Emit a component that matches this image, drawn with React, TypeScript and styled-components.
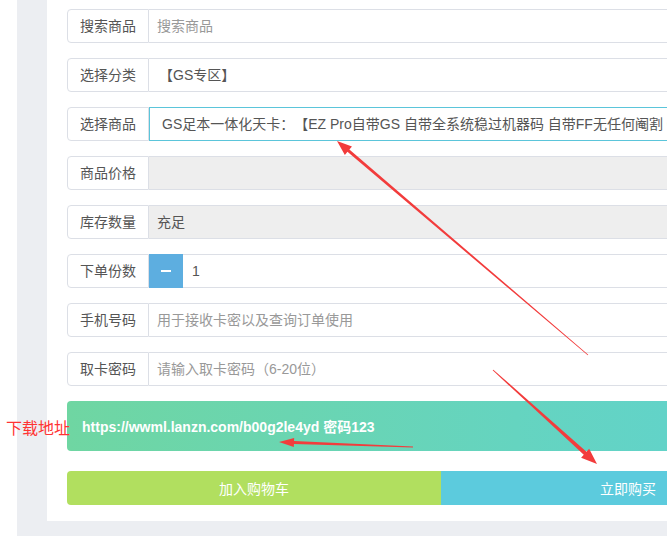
import React from 'react';
import styled, { createGlobalStyle } from 'styled-components';

const GlobalStyle = createGlobalStyle`
  html, body {
    margin: 0;
    padding: 0;
    background: #fff;
    overflow: hidden;
  }
  body {
    font-family: "Liberation Sans", Arial, "Noto Sans CJK SC", sans-serif;
    text-spacing-trim: space-all;
  }
`;

const Page = styled.div`
  position: relative;
  width: 667px;
  height: 536px;
  overflow: hidden;
  display: flex;
`;

const Gutter = styled.div`
  width: 17px;
  flex-shrink: 0;
  background: #fff;
`;

const Backdrop = styled.div`
  flex: 1;
  background: #eceef2;
  padding-left: 30px;
  display: flex;
  align-items: flex-start;
`;

const Panel = styled.div`
  width: 748px;
  flex-shrink: 0;
  background: #fff;
  padding: 9px 20px 16px;
  display: flex;
  flex-direction: column;
`;

const Group = styled.div`
  display: flex;
  height: 34px;
  margin-bottom: 15px;
`;

const Label = styled.div`
  box-sizing: border-box;
  width: 82px;
  flex-shrink: 0;
  padding: 0 12px;
  border: 1px solid #dcdfe6;
  border-radius: 4px 0 0 4px;
  background: #fff;
  color: #555;
  font-size: 14px;
  line-height: 32px;
  white-space: nowrap;
`;

const Field = styled.div<{ $disabled?: boolean; $focus?: boolean; $pad?: number; $muted?: boolean }>`
  box-sizing: border-box;
  flex: 1;
  min-width: 0;
  border: 1px solid ${p => (p.$focus ? '#5bc5da' : '#dcdfe6')};
  border-left: ${p => (p.$focus ? '1px solid #5bc5da' : 'none')};
  background: ${p => (p.$disabled ? '#eeeeee' : '#fff')};
  color: ${p => (p.$muted ? '#999' : '#555')};
  padding-left: ${p => p.$pad ?? 8}px;
  font-size: 14px;
  line-height: 32px;
  white-space: nowrap;
  overflow: hidden;
  text-spacing-trim: space-all;
`;

const MinusButton = styled.div`
  width: 34px;
  flex-shrink: 0;
  background: #5daee0;
  display: flex;
  align-items: center;
  justify-content: center;
  &::before {
    content: '';
    width: 10px;
    height: 2px;
    background: #fff;
  }
`;

const Banner = styled.div`
  height: 50px;
  border-radius: 4px;
  background: linear-gradient(90deg, #6fd6a2 0%, #65d4c0 60%, #5fd2d0 100%);
  color: #fff;
  font-weight: bold;
  font-size: 14px;
  padding-left: 15px;
  display: flex;
  align-items: center;
  margin-bottom: 20px;
`;

const ButtonRow = styled.div`
  display: flex;
  height: 34px;
`;

const ActionButton = styled.div<{ $bg: string; $left?: boolean }>`
  flex: 1;
  background: ${p => p.$bg};
  border-radius: ${p => (p.$left ? '4px 0 0 4px' : '0 4px 4px 0')};
  color: #fff;
  font-size: 14px;
  display: flex;
  align-items: center;
  justify-content: center;
`;

const Note = styled.div`
  position: absolute;
  left: 6px;
  top: 417px;
  color: #f33;
  font-size: 16px;
  line-height: 20px;
  font-family: "Noto Sans CJK SC", sans-serif;
`;

const Overlay = styled.svg`
  position: absolute;
  left: 0;
  top: 0;
  pointer-events: none;
`;

type Pt = [number, number];

function arrowPoints(tail: Pt, tip: Pt, headLen: number, headW: number, tailW: number, shaftW: number) {
  const dx = tip[0] - tail[0];
  const dy = tip[1] - tail[1];
  const len = Math.hypot(dx, dy);
  const ux = dx / len;
  const uy = dy / len;
  const nx = -uy;
  const ny = ux;
  const bx = tip[0] - ux * headLen;
  const by = tip[1] - uy * headLen;
  const pts: Pt[] = [
    [tail[0] + nx * tailW / 2, tail[1] + ny * tailW / 2],
    [bx + nx * shaftW / 2, by + ny * shaftW / 2],
    [bx + nx * headW / 2, by + ny * headW / 2],
    tip,
    [bx - nx * headW / 2, by - ny * headW / 2],
    [bx - nx * shaftW / 2, by - ny * shaftW / 2],
    [tail[0] - nx * tailW / 2, tail[1] - ny * tailW / 2],
  ];
  return pts.map(p => p.join(',')).join(' ');
}

const App: React.FC = () => {
  return (
    <>
      <GlobalStyle />
      <Page>
        <Gutter />
        <Backdrop>
          <Panel>
            <Group>
              <Label>搜索商品</Label>
              <Field $muted>搜索商品</Field>
            </Group>
            <Group>
              <Label>选择分类</Label>
              <Field $pad={10}>【GS专区】</Field>
            </Group>
            <Group>
              <Label>选择商品</Label>
              <Field $focus $pad={12}>
                GS足本一体化天卡：【EZ Pro自带GS 自带全系统稳过机器码 自带FF无任何阉割 G
              </Field>
            </Group>
            <Group>
              <Label>商品价格</Label>
              <Field $disabled />
            </Group>
            <Group>
              <Label>库存数量</Label>
              <Field $disabled>充足</Field>
            </Group>
            <Group>
              <Label>下单份数</Label>
              <MinusButton />
              <Field $pad={9}>1</Field>
            </Group>
            <Group>
              <Label>手机号码</Label>
              <Field $muted>用于接收卡密以及查询订单使用</Field>
            </Group>
            <Group>
              <Label>取卡密码</Label>
              <Field $muted>请输入取卡密码（6-20位）</Field>
            </Group>
            <Banner>https://wwml.lanzn.com/b00g2le4yd 密码123</Banner>
            <ButtonRow>
              <ActionButton $bg="#b1df5f" $left>加入购物车</ActionButton>
              <ActionButton $bg="#5ccbdd">立即购买</ActionButton>
            </ButtonRow>
          </Panel>
        </Backdrop>
        <Note>下载地址</Note>
        <Overlay width="667" height="536" viewBox="0 0 667 536">
          <polygon fill="#f23c3c" points={arrowPoints([588, 355], [337, 141], 15, 11, 0.8, 3)} />
          <polygon fill="#f23c3c" points={arrowPoints([493, 370], [597, 464], 16, 12, 1, 4)} />
          <polygon fill="#f23c3c" points={arrowPoints([413, 447], [279, 442], 15, 9, 0.8, 3)} />
        </Overlay>
      </Page>
    </>
  );
};

export default App;
